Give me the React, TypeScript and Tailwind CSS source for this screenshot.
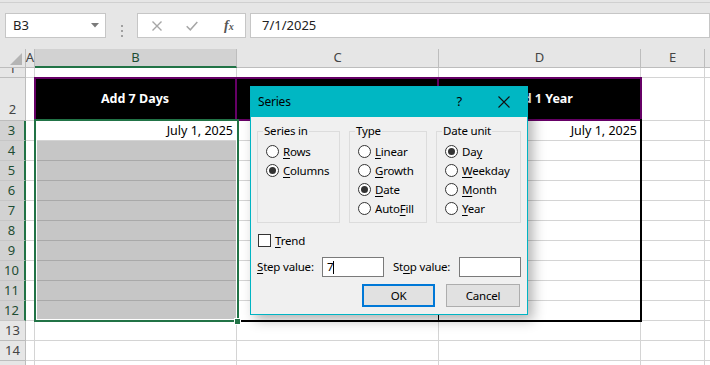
import React from 'react';

const Radio = ({ checked, label, u }: { checked?: boolean; label: string; u: number }) => (
    <div className="h-[19px] flex items-center">
        <span className="w-[13px] h-[13px] rounded-full border border-[#333] bg-white flex items-center justify-center shrink-0">
            {checked && <span className="w-[7px] h-[7px] rounded-full bg-[#333]" />}
        </span>
        <span className="ml-[4px] leading-none">
            {label.slice(0, u)}
            <span className="underline underline-offset-2">{label[u]}</span>
            {label.slice(u + 1)}
        </span>
    </div>
);

const GroupBox = ({ title, width, children }: { title: string; width: string; children: React.ReactNode }) => (
    <div className={`relative h-[92px] border border-[#dcdcdc] pt-[10px] pl-[8px] ${width}`}>
        <span className="absolute -top-[9px] left-[5px] px-[1px] bg-[#f0f0f0] leading-[16px]">{title}</span>
        {children}
    </div>
);

const SeriesDialog = () => (
    <div className="absolute left-[250px] top-[86px] w-[278px] h-[229px] border border-[#00b4c3] bg-[#f0f0f0] shadow-[5px_5px_12px_rgba(0,0,0,0.3)] text-[11.5px] tracking-[-0.2px] text-black font-['Noto_Sans',sans-serif]">
        <div className="h-[30px] bg-[#00b7c3] flex items-center pl-[7px] relative">
            <span className="text-[12px]">Series</span>
            <span className="ml-auto mr-[36px] text-[13px]">?</span>
            <svg width="12" height="12" viewBox="0 0 12 12" className="mr-[17px]">
                <path d="M0.5 0.5 L11.5 11.5 M11.5 0.5 L0.5 11.5" stroke="#111" strokeWidth="1.1" />
            </svg>
        </div>
        <div className="px-[6px]">
            <div className="mt-[14px] flex gap-[9px]">
                <GroupBox title="Series in" width="w-[83px]">
                    <Radio label="Rows" u={0} />
                    <Radio label="Columns" u={0} checked />
                </GroupBox>
                <GroupBox title="Type" width="w-[78px]">
                    <Radio label="Linear" u={0} />
                    <Radio label="Growth" u={0} />
                    <Radio label="Date" u={0} checked />
                    <Radio label="AutoFill" u={4} />
                </GroupBox>
                <GroupBox title="Date unit" width="w-[85px]">
                    <Radio label="Day" u={2} checked />
                    <Radio label="Weekday" u={0} />
                    <Radio label="Month" u={0} />
                    <Radio label="Year" u={0} />
                </GroupBox>
            </div>
            <div className="mt-[11px] h-[13px] flex items-center pl-[1px]">
                <span className="w-[13px] h-[13px] border border-[#333] bg-white" />
                <span className="ml-[4px] leading-none">
                    <span className="underline underline-offset-2">T</span>rend
                </span>
            </div>
            <div className="mt-[10px] h-[20px] flex items-center">
                <span className="w-[65px] leading-none">
                    <span className="underline underline-offset-2">S</span>tep value:
                </span>
                <div className="w-[62px] h-[20px] border border-[#7a7a7a] bg-white flex items-center pl-[4px]">
                    7<span className="w-px h-[13px] bg-black" />
                </div>
                <span className="ml-[9px] w-[66px] leading-none">
                    St<span className="underline underline-offset-2">o</span>p value:
                </span>
                <div className="w-[62px] h-[20px] border border-[#7a7a7a] bg-white" />
            </div>
            <div className="mt-[7px] flex justify-end gap-[11px] pr-[1px]">
                <button className="w-[73px] h-[23px] border-2 border-[#0078d7] bg-[#e1e1e1]">OK</button>
                <button className="w-[74px] h-[23px] border border-[#adadad] bg-[#e1e1e1]">Cancel</button>
            </div>
        </div>
    </div>
);

const rowNums = [3, 4, 5, 6, 7, 8, 9, 10, 11, 12];

export default function App() {
    return (
        <div className="relative w-[710px] h-[365px] overflow-hidden bg-white font-['Noto_Sans',sans-serif] text-black">
            {/* formula bar */}
            <div className="h-[49px] bg-[#e6e6e6] pt-[2px]">
                <div className="h-[47px] border-t border-[#d0d0d0] flex pt-[10px]">
                    <div className="ml-[5px] w-[101px] h-[25px] bg-white border border-[#c6c6c6] flex items-center pl-[7px] text-[13px] text-[#222]">
                        B3
                        <svg width="8" height="5" viewBox="0 0 8 5" className="ml-auto mr-[6px]">
                            <path d="M0 0 L8 0 L4 4.5 Z" fill="#7a7a7a" />
                        </svg>
                    </div>
                    <div className="w-[31px] flex flex-col items-center justify-center gap-[3px]">
                        <span className="w-[2px] h-[2px] bg-[#a0a0a0]" />
                        <span className="w-[2px] h-[2px] bg-[#a0a0a0]" />
                        <span className="w-[2px] h-[2px] bg-[#a0a0a0]" />
                    </div>
                    <div className="w-[109px] h-[25px] bg-white border border-[#c6c6c6] flex items-center">
                        <svg width="10" height="10" viewBox="0 0 10 10" className="ml-[14px]">
                            <path d="M0.5 0.5 L9.5 9.5 M9.5 0.5 L0.5 9.5" stroke="#a6a6a6" strokeWidth="1.4" />
                        </svg>
                        <svg width="12" height="10" viewBox="0 0 12 10" className="ml-[24px]">
                            <path d="M0.7 5.2 L4.3 8.8 L11.3 1" stroke="#a6a6a6" strokeWidth="1.5" fill="none" />
                        </svg>
                        <span className="ml-[26px] font-['Liberation_Serif',serif] italic font-bold text-[14px] text-[#555] leading-none">
                            f<span className="text-[10px]">x</span>
                        </span>
                    </div>
                    <div className="ml-[4px] flex-1 h-[25px] bg-white border border-[#c6c6c6] flex items-center pl-[11px] text-[13px] text-[#222]">
                        7/1/2025
                    </div>
                </div>
            </div>

            {/* column headers */}
            <div className="flex h-[19px] text-[13px] text-[#444]">
                <div className="w-[26px] shrink-0 bg-[#e6e6e6] border-r border-b border-[#bdbdbd] flex items-end justify-end pr-[3px] pb-[2px]">
                    <svg width="12" height="12" viewBox="0 0 12 12">
                        <path d="M12 0 L12 12 L0 12 Z" fill="#b4b4b4" />
                    </svg>
                </div>
                <div className="w-[9px] shrink-0 bg-[#e6e6e6] border-r border-b border-[#bdbdbd] flex items-center justify-center overflow-visible">A</div>
                <div className="w-[202px] shrink-0 bg-[#d2d2d2] border-r border-[#bdbdbd] border-b-2 border-b-[#217346] flex items-center justify-center text-[#1e4d33]">B</div>
                <div className="w-[202px] shrink-0 bg-[#e6e6e6] border-r border-b border-[#bdbdbd] flex items-center justify-center">C</div>
                <div className="w-[202px] shrink-0 bg-[#e6e6e6] border-r border-b border-[#bdbdbd] flex items-center justify-center">D</div>
                <div className="w-[64px] shrink-0 bg-[#e6e6e6] border-r border-b border-[#bdbdbd] flex items-center justify-center">E</div>
                <div className="flex-1 bg-[#e6e6e6] border-b border-[#bdbdbd]" />
            </div>

            {/* row 1 */}
            <div className="flex h-[10px]">
                <div className="w-[26px] shrink-0 bg-[#e6e6e6] border-r border-b border-[#bdbdbd] flex justify-center overflow-hidden text-[13px] text-[#444] leading-none">
                    <span className="-mt-[6px]">1</span>
                </div>
                <div className="w-[9px] shrink-0 border-r border-b border-[#d4d4d4]" />
                <div className="w-[202px] shrink-0 border-r border-b border-[#d4d4d4]" />
                <div className="w-[202px] shrink-0 border-r border-b border-[#d4d4d4]" />
                <div className="w-[202px] shrink-0 border-r border-b border-[#d4d4d4]" />
                <div className="w-[64px] shrink-0 border-r border-b border-[#d4d4d4]" />
                <div className="flex-1 border-b border-[#d4d4d4]" />
            </div>

            {/* row 2 */}
            <div className="flex h-[43px]">
                <div className="w-[26px] shrink-0 bg-[#e6e6e6] border-r border-b border-[#bdbdbd] flex items-end justify-center pb-[1px] text-[13px] text-[#444]">2</div>
                <div className="w-[9px] shrink-0 border-r border-b border-[#d4d4d4]" />
                <div className="w-[202px] shrink-0 bg-black border-r-2 border-r-[#660066] flex items-center justify-center text-white font-bold text-[12.5px]">Add 7 Days</div>
                <div className="w-[202px] shrink-0 bg-black border-r-2 border-r-[#660066] flex items-center justify-center text-white font-bold text-[12.5px]">Add 1 Month</div>
                <div className="w-[202px] shrink-0 bg-black flex items-center justify-center text-white font-bold text-[12.5px]">Add 1 Year</div>
                <div className="w-[64px] shrink-0 border-r border-b border-[#d4d4d4]" />
                <div className="flex-1 border-b border-[#d4d4d4]" />
            </div>

            {/* rows 3-12 */}
            {rowNums.map((n) => (
                <div key={n} className="flex h-[20px]">
                    <div className="w-[26px] shrink-0 bg-[#d2d2d2] border-b border-[#c6c6c6] border-r-2 border-r-[#217346] flex items-end justify-center pr-[1px] text-[13px] leading-[19px] text-[#1e4d33]">{n}</div>
                    <div className="w-[9px] shrink-0 border-r border-b border-[#d4d4d4]" />
                    {n === 3 ? (
                        <div className="w-[202px] shrink-0 border-b border-[#d4d4d4] flex items-end justify-end pr-[4px] text-[12.5px] leading-[19px]">July 1, 2025</div>
                    ) : (
                        <div className="w-[202px] shrink-0 bg-[#c6c6c6] border-b border-[#a9a9a9]" />
                    )}
                    <div className="w-[202px] shrink-0 border-r border-r-black border-b border-b-[#d4d4d4]" />
                    <div className="w-[202px] shrink-0 border-b border-[#d4d4d4] flex items-end justify-end pr-[4px] text-[12.5px] leading-[19px]">
                        {n === 3 ? 'July 1, 2025' : ''}
                    </div>
                    <div className="w-[64px] shrink-0 border-r border-b border-[#d4d4d4]" />
                    <div className="flex-1 border-b border-[#d4d4d4]" />
                </div>
            ))}

            {/* rows 13-15 */}
            {[13, 14, 15].map((n) => (
                <div key={n} className="flex h-[20px]">
                    <div className="w-[26px] shrink-0 bg-[#e6e6e6] border-r border-b border-[#bdbdbd] flex items-end justify-center text-[13px] leading-[19px] text-[#444]">{n < 15 ? n : ''}</div>
                    <div className="w-[9px] shrink-0 border-r border-b border-[#d4d4d4]" />
                    <div className="w-[202px] shrink-0 border-r border-b border-[#d4d4d4]" />
                    <div className="w-[202px] shrink-0 border-r border-b border-[#d4d4d4]" />
                    <div className="w-[202px] shrink-0 border-r border-b border-[#d4d4d4]" />
                    <div className="w-[64px] shrink-0 border-r border-b border-[#d4d4d4]" />
                    <div className="flex-1 border-b border-[#d4d4d4]" />
                </div>
            ))}

            {/* cell borders over the grid */}
            <div className="absolute left-[34px] top-[77px] w-[608px] h-[44px] border-2 border-[#660066] pointer-events-none" />
            <div className="absolute left-[34px] top-[119px] w-[608px] h-[203px] border-r-2 border-b-2 border-black pointer-events-none" />

            {/* selection */}
            <div className="absolute left-[34px] top-[119px] w-[205px] h-[203px] border-2 border-[#217346] pointer-events-none">
                <div className="w-full h-full border border-white" />
            </div>
            <div className="absolute left-[234px] top-[318px] w-[7px] h-[7px] bg-[#217346] border border-white" />

            <SeriesDialog />
        </div>
    );
}
